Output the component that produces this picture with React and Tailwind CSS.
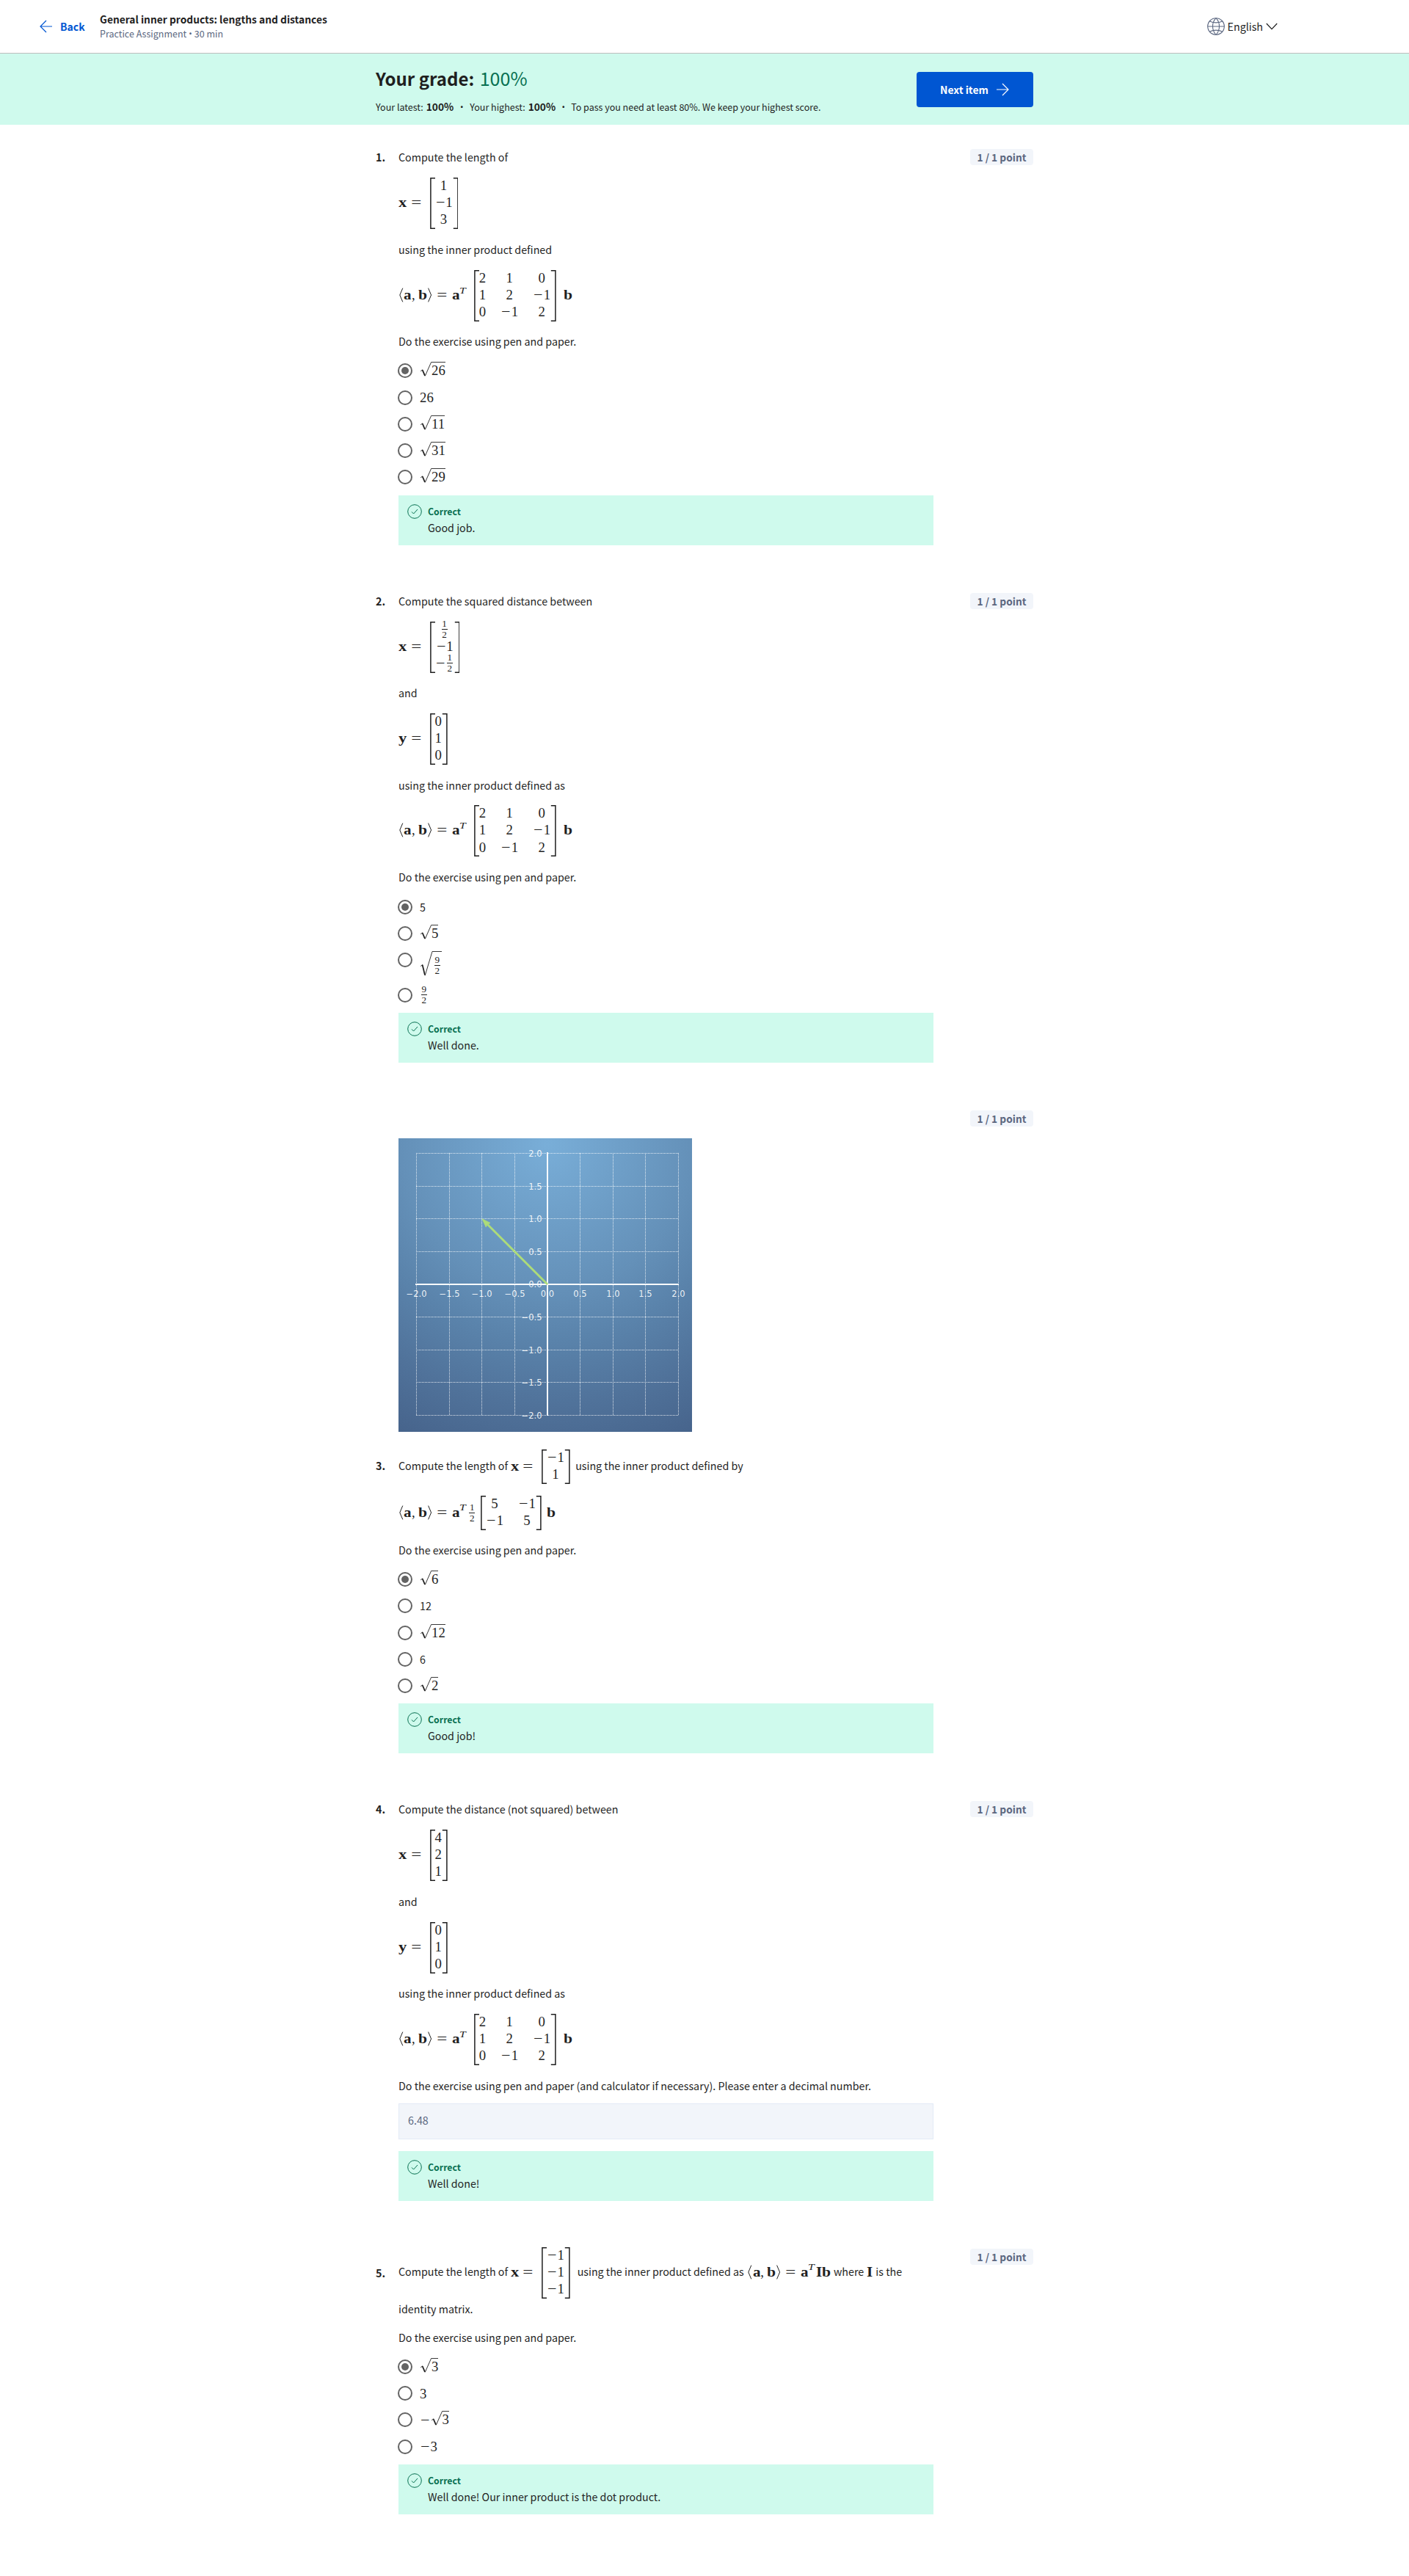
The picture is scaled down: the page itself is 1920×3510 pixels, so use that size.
import React from "react";

const BOLD_SHAPES = {
  x: "w-[11.4px] scale-x-[1.2]",
  y: "w-[11.4px] scale-x-[1.2]",
  a: "w-[10.6px] scale-x-[1.12]",
  b: "w-[12px] scale-x-[1.15]",
  I: "w-[8.2px] scale-x-[1.12]",
};

/* ---------- math pieces ---------- */

function Bold({ children }) {
  return (
    <span className={`inline-block shrink-0 origin-left pb-[3px] font-bold ${BOLD_SHAPES[children]}`}>{children}</span>
  );
}

function Minus() {
  return (
    <span className="inline-flex w-[14.6px] shrink-0 justify-center">
      <span className="inline-block scale-x-[1.18]">−</span>
    </span>
  );
}

function Equals() {
  return (
    <span className="mx-[5.4px] inline-flex w-[14.6px] shrink-0 justify-center pb-[3px]">
      <span className="inline-block scale-x-[1.33]">=</span>
    </span>
  );
}

function Num({ children }) {
  const negative = children.startsWith("-");
  return (
    <span className="inline-flex items-center">
      {negative && <Minus />}
      {negative ? children.slice(1) : children}
    </span>
  );
}

function Frac({ top, bottom }) {
  return (
    <span className="inline-flex w-[11.5px] shrink-0 flex-col items-center text-[13.2px] leading-[14px]">
      <span>{top}</span>
      <span className="h-px w-[8px] bg-[#1f1f1f]" />
      <span>{bottom}</span>
    </span>
  );
}

function Bracket({ height, right }) {
  return right ? (
    <svg width="7.8" height={height} viewBox={`0 0 7.8 ${height}`} className="shrink-0">
      <path d={`M.8 .75H6.9V${height - 0.75}H.8`} fill="none" stroke="#1f1f1f" strokeWidth="1.5" />
    </svg>
  ) : (
    <svg width="7" height={height} viewBox={`0 0 7 ${height}`} className="shrink-0">
      <path d={`M7 .75H.9V${height - 0.75}H7`} fill="none" stroke="#1f1f1f" strokeWidth="1.5" />
    </svg>
  );
}

function Angle({ right }) {
  return (
    <svg width="7.4" height="20" viewBox="0 0 7.4 20" className="mb-[2px] shrink-0" fill="none" stroke="#1f1f1f">
      <path d={right ? "M1.6 .6 5.6 10 1.6 19.4" : "M5.8 .6 1.8 10 5.8 19.4"} strokeWidth="1" />
    </svg>
  );
}

function Matrix({ columns }) {
  const height = columns[0].length === 3 ? 70 : 47;
  return (
    <span className="inline-flex shrink-0 items-center">
      <Bracket height={height} />
      <span className="flex gap-5 pb-[3px]">
        {columns.map((col, i) => (
          <span key={i} className="flex flex-col items-center">
            {col.map((cell, j) => (
              <span key={j} className="flex h-[23.2px] items-center">
                {typeof cell === "string" ? <Num>{cell}</Num> : cell}
              </span>
            ))}
          </span>
        ))}
      </span>
      <Bracket height={height} right />
    </span>
  );
}

function Radical({ tall }) {
  return tall ? (
    <svg width="18" height="34" viewBox="0 0 18 34" className="shrink-0" fill="none" stroke="#1f1f1f">
      <path d="M1.2 20.6 3.8 18.4M7.2 33.2 17 .5H18.5" strokeWidth="0.9" />
      <path d="M3.6 18.6 7 32.6" strokeWidth="1.8" />
    </svg>
  ) : (
    <svg width="16" height="20" viewBox="0 0 16 20" className="shrink-0" fill="none" stroke="#1f1f1f">
      <path d="M1.2 12.8 3.8 10.8M7.2 19.4 15.6 .5H17" strokeWidth="0.9" />
      <path d="M3.6 11 7 18.8" strokeWidth="1.8" />
    </svg>
  );
}

function Sqrt({ children }) {
  return (
    <span className="inline-flex h-6 shrink-0 items-start">
      <Radical />
      <span className="block h-5 border-t border-[#3a3a3a] leading-[21.4px]">{children}</span>
    </span>
  );
}

function Inner() {
  return (
    <>
      <Angle />
      <Bold>a</Bold>
      <span className="w-[9.2px] shrink-0 pb-[3px]">,</span>
      <Bold>b</Bold>
      <Angle right />
      <Equals />
      <span className="w-[0.8px] shrink-0" />
      <Bold>a</Bold>
      <span className="-ml-[0.8px] inline-block w-[11px] shrink-0 origin-left scale-x-[1.2] pb-[16px] text-[13.2px] italic">
        T
      </span>
    </>
  );
}

/* ---------- text rows ---------- */

const MATH = "font-['Liberation_Serif',serif] text-[18.8px] leading-[21px]";

function Text({ className = "", children }) {
  return <p className={`h-6 whitespace-nowrap ${className}`}>{children}</p>;
}

function Eq({ className = "h-[70px]", children }) {
  return <div className={`flex items-center whitespace-nowrap ${MATH} ${className}`}>{children}</div>;
}

function Words({ className = "", children }) {
  return (
    <span className={`shrink-0 pb-[3px] font-['Noto_Sans_CJK_SC',sans-serif] text-[14.28px] leading-6 ${className}`}>
      {children}
    </span>
  );
}

function Vector({ name, cells, className = "" }) {
  return (
    <Eq className={`h-[70px] ${className}`}>
      <Bold>{name}</Bold>
      <Equals />
      <span className="w-[5.8px]" />
      <Matrix columns={[cells]} />
    </Eq>
  );
}

const FORM = [["2", "1", "0"], ["1", "2", "-1"], ["0", "-1", "2"]];

function InnerProduct3({ className = "" }) {
  return (
    <Eq className={`h-[70px] ${className}`}>
      <Inner />
      <span className="w-[9.3px]" />
      <Matrix columns={FORM} />
      <span className="w-[10.4px]" />
      <Bold>b</Bold>
    </Eq>
  );
}

/* ---------- answers ---------- */

function Radio({ checked }) {
  return (
    <span className="-ml-px flex size-5 shrink-0 items-center justify-center rounded-full border-2 border-[#636363]">
      {checked && <span className="size-2.5 rounded-full bg-[#636363]" />}
    </span>
  );
}

function Options({ items }) {
  return (
    <ul className="mt-2.5">
      {items.map((item, i) =>
        item.tall ? (
          <li key={i} className="flex h-12 items-start">
            <span className="pt-2">
              <Radio checked={i === 0} />
            </span>
            <span className={`ml-2.5 flex pt-1.5 ${MATH}`}>{item.tall}</span>
          </li>
        ) : (
          <li key={i} className="flex h-[36.2px] items-center">
            <Radio checked={i === 0} />
            {item.text ? (
              <span className="ml-2.5">{item.text}</span>
            ) : (
              <span className={`ml-2.5 flex items-center ${MATH}`}>{item.math}</span>
            )}
          </li>
        )
      )}
    </ul>
  );
}

function Feedback({ className = "mt-1.5", children }) {
  return (
    <div className={`flex h-[68px] bg-[#cffaed] pl-3 pt-3 ${className}`}>
      <svg width="20" height="20" viewBox="0 0 20 20" fill="none" stroke="#087051" className="shrink-0">
        <circle cx="10" cy="10" r="9.3" />
        <path d="m6 10.4 2.6 2.6L14 7" />
      </svg>
      <div className="ml-2">
        <p className="text-[12.3px] font-bold leading-5 text-[#087051]">Correct</p>
        <p>{children}</p>
      </div>
    </div>
  );
}

function Question({ n, numberClass = "", children }) {
  return (
    <section className="mb-16 flex">
      <div className={`w-[31px] shrink-0 font-bold ${numberClass}`}>{n}.</div>
      <div className="w-[729px] shrink-0">{children}</div>
      <div className="flex flex-1 justify-end">
        <span className="mt-px h-[22px] rounded bg-[#f2f5fa] px-[9.5px] text-[13.72px] font-bold leading-[22px] text-[#5b6780]">
          1 / 1 point
        </span>
      </div>
    </section>
  );
}

/* ---------- plot ---------- */

const STEPS = [0, 1, 2, 3, 4, 5, 6, 7, 8];
const XS = [24.5, 69.5, 113.5, 158.5, 203, 247.5, 292.5, 336.5, 381.5];
const YS = [20.5, 65.5, 109.5, 154.5, 199, 243.5, 288.5, 332.5, 377.5];
const tick = (v) => (v < 0 ? "−" : "") + Math.abs(v).toFixed(1);

function Plot() {
  return (
    <svg width="400" height="400" viewBox="0 0 400 400" className="mt-[39px] block">
      <defs>
        <radialGradient id="sky" gradientUnits="userSpaceOnUse" cx="203" cy="8" r="445">
          <stop offset="0" stopColor="#79aed8" />
          <stop offset="0.45" stopColor="#6490b8" />
          <stop offset="0.6" stopColor="#5a83ab" />
          <stop offset="0.8" stopColor="#50729a" />
          <stop offset="1" stopColor="#46638b" />
        </radialGradient>
      </defs>
      <rect width="400" height="400" fill="url(#sky)" />
      <g stroke="#fff" strokeOpacity="0.8" strokeDasharray="1 1">
        {STEPS.map((i) => (
          <path key={i} d={`M${XS[i]} 20V378M24 ${YS[i]}H382`} />
        ))}
      </g>
      <g fill="#fff" fillOpacity="0.9" className="font-['DejaVu_Sans',sans-serif] text-[11.5px]">
        {STEPS.map((i) => (
          <React.Fragment key={i}>
            <text x={XS[i]} y="216" textAnchor="middle">{tick(-2 + i * 0.5)}</text>
            <text x="195.5" y={YS[i] + 4.3} textAnchor="end">{tick(2 - i * 0.5)}</text>
          </React.Fragment>
        ))}
      </g>
      <path d="M23 199H382M203 19V378" stroke="#f7fafc" strokeWidth="2" />
      <path d="M203 199 121.5 117.5" stroke="#addc79" strokeWidth="2.8" />
      <path d="m114 109.8 11 5.6-3.2 1.800-1.400 1.400-1.200 2.400z" fill="#addc79" stroke="#addc79" strokeWidth="0.8" />
    </svg>
  );
}

/* ---------- page ---------- */

export default function App() {
  return (
    <div className="min-h-[3510px] w-full bg-white font-['Noto_Sans_CJK_SC',sans-serif] text-[14.28px] leading-6 text-[#1f1f1f]">
      <header className="flex h-[73px] justify-between border-b border-[#bdbdbd] pl-[54px] pr-[179px]">
        <div className="flex">
          <svg width="17" height="18" viewBox="0 0 17 18" fill="none" stroke="#0056d2" className="mt-[27px]">
            <path d="M9 1 1 9l8 8M1 9h16" strokeWidth="1.2" />
          </svg>
          <span className="ml-[11px] mt-[26px] w-[54px] text-[14px] font-bold leading-5 text-[#0056d2]">Back</span>
          <div className="pt-4">
            <h1 className="text-[13.79px] font-bold leading-5">General inner products: lengths and distances</h1>
            <p className="mt-px flex whitespace-nowrap text-[12.5px] leading-[18px] text-[#5b6780]">
              Practice Assignment
              <span className="flex w-[10.5px] justify-center">•</span>
              30 min
            </p>
          </div>
        </div>
        <div className="flex h-[72px] items-center">
          <svg width="24" height="24" viewBox="0 0 24 24" fill="none" stroke="#5b6780" strokeWidth="1.1">
            <circle cx="12" cy="12" r="11.3" />
            <path d="M12 .7c-6 6-6 16.6 0 22.6M12 .7c6 6 6 16.6 0 22.6M.7 12h22.6M3.4 5c5 2.2 12.2 2.2 17.2 0M3.4 19c5-2.2 12.2-2.2 17.2 0" />
          </svg>
          <span className="ml-1">English</span>
          <svg width="16" height="10" viewBox="0 0 16 10" fill="none" stroke="#1f1f1f" className="ml-1" strokeWidth="1.2">
            <path d="m.8 1 7.2 7.6L15.2 1" />
          </svg>
        </div>
      </header>

      <div className="h-[97px] bg-[#cffaed]">
        <div className="mx-auto flex w-[896px] justify-between pt-[17px]">
          <div>
            <h2 className="text-2xl/8 font-bold">
              Your grade: <span className="ml-0.5 text-[25.1px] font-normal text-[#087051]">100%</span>
            </h2>
            <p className="mt-3 flex items-baseline whitespace-nowrap text-[12.5px] leading-5">
              Your latest: <b className="ml-1 text-[13.72px] font-bold">100%</b>
              <span className="w-[22px] text-center">•</span>
              Your highest: <b className="ml-1 text-[13.72px] font-bold">100%</b>
              <span className="w-[21px] text-center">•</span>
              To pass you need at least 80%. We keep your highest score.
            </p>
          </div>
          <button className="mt-2 flex h-12 w-[159px] items-center rounded bg-[#0056d2] pl-8 text-[13.9px] font-bold text-white">
            <span className="w-[77px] text-left">Next item</span>
            <svg width="17" height="18" viewBox="0 0 17 18" fill="none" stroke="#fff" strokeWidth="1.2">
              <path d="m8 1 8 8-8 8M16 9H0" />
            </svg>
          </button>
        </div>
      </div>

      <main className="mx-auto w-[896px] pt-8">
        <Question n={1}>
          <Text>Compute the length of</Text>
          <Vector name="x" cells={["1", "-1", "3"]} className="my-4" />
          <Text>using the inner product defined</Text>
          <InnerProduct3 className="mb-[15.3px] mt-4" />
          <Text>Do the exercise using pen and paper.</Text>
          <Options
            items={[
              { math: <Sqrt>26</Sqrt> },
              { math: "26" },
              { math: <Sqrt>11</Sqrt> },
              { math: <Sqrt>31</Sqrt> },
              { math: <Sqrt>29</Sqrt> },
            ]}
          />
          <Feedback className="mt-[6.7px]">Good job.</Feedback>
        </Question>

        <Question n={2}>
          <Text>Compute the squared distance between</Text>
          <Vector
            name="x"
            cells={[
              <Frac top="1" bottom="2" />,
              "-1",
              <span className="flex items-center"><Minus /><Frac top="1" bottom="2" /></span>,
            ]}
            className="mb-[15.5px] mt-4"
          />
          <Text>and</Text>
          <Vector name="y" cells={["0", "1", "0"]} className="mb-[15.7px] mt-[15.7px]" />
          <Text>using the inner product defined as</Text>
          <InnerProduct3 className="mb-4 mt-[15.7px]" />
          <Text>Do the exercise using pen and paper.</Text>
          <Options
            items={[
              { text: "5" },
              { math: <Sqrt>5</Sqrt> },
              {
                tall: (
                  <>
                    <Radical tall />
                    <span className="flex h-[34px] items-start border-t border-[#3a3a3a] pt-1">
                      <Frac top="9" bottom="2" />
                    </span>
                  </>
                ),
              },
              { math: <Frac top="9" bottom="2" /> },
            ]}
          />
          <Feedback>Well done.</Feedback>
        </Question>

        <Question n={3} numberClass="pt-[473px]">
          <Plot />
          <Eq className="mt-6 h-[47px]">
            <Words>Compute the length of</Words>
            <span className="w-[3.5px]" />
            <Bold>x</Bold>
            <Equals />
            <span className="w-[5.5px]" />
            <Matrix columns={[["-1", "1"]]} />
            <Words className="ml-[7.5px]">using the inner product defined by</Words>
          </Eq>
          <Eq className="mb-[15px] mt-4 h-[47px]">
            <Inner />
            <span className="w-px" />
            <Frac top="1" bottom="2" />
            <span className="w-1.5" />
            <Matrix columns={[["5", "-1"], ["-1", "5"]]} />
            <span className="w-[7px]" />
            <Bold>b</Bold>
          </Eq>
          <Text>Do the exercise using pen and paper.</Text>
          <Options
            items={[
              { math: <Sqrt>6</Sqrt> },
              { text: "12" },
              { math: <Sqrt>12</Sqrt> },
              { text: "6" },
              { math: <Sqrt>2</Sqrt> },
            ]}
          />
          <Feedback>Good job!</Feedback>
        </Question>

        <Question n={4}>
          <Text>Compute the distance (not squared) between</Text>
          <Vector name="x" cells={["4", "2", "1"]} className="my-4" />
          <Text>and</Text>
          <Vector name="y" cells={["0", "1", "0"]} className="mb-[15.3px] mt-4" />
          <Text>using the inner product defined as</Text>
          <InnerProduct3 className="my-4" />
          <Text>Do the exercise using pen and paper (and calculator if necessary). Please enter a decimal number.</Text>
          <div className="mt-[11.7px] flex h-[49px] items-center border border-[#e3eaf6] bg-[#f2f5fa] px-3 pb-0.5 text-[#5b6780]">
            6.48
          </div>
          <Feedback className="mt-4">Well done!</Feedback>
        </Question>

        <Question n={5} numberClass="pt-[22px]">
          <Eq className="-mt-px h-[70px]">
            <Words>Compute the length of</Words>
            <span className="w-[3.5px]" />
            <Bold>x</Bold>
            <Equals />
            <span className="w-[5.5px]" />
            <Matrix columns={[["-1", "-1", "-1"]]} />
            <Words className="ml-2.5">using the inner product defined as</Words>
            <span className="w-[4.5px]" />
            <Inner />
            <Bold>I</Bold>
            <Bold>b</Bold>
            <Words className="ml-1">where</Words>
            <span className="w-1" />
            <Bold>I</Bold>
            <Words className="ml-1">is the</Words>
          </Eq>
          <Text className="mt-0.5">identity matrix.</Text>
          <Text className="mt-[15px]">Do the exercise using pen and paper.</Text>
          <Options
            items={[
              { math: <Sqrt>3</Sqrt> },
              { math: "3" },
              { math: <><Minus /><Sqrt>3</Sqrt></> },
              { math: <Num>-3</Num> },
            ]}
          />
          <Feedback>Well done! Our inner product is the dot product.</Feedback>
        </Question>
      </main>
    </div>
  );
}
